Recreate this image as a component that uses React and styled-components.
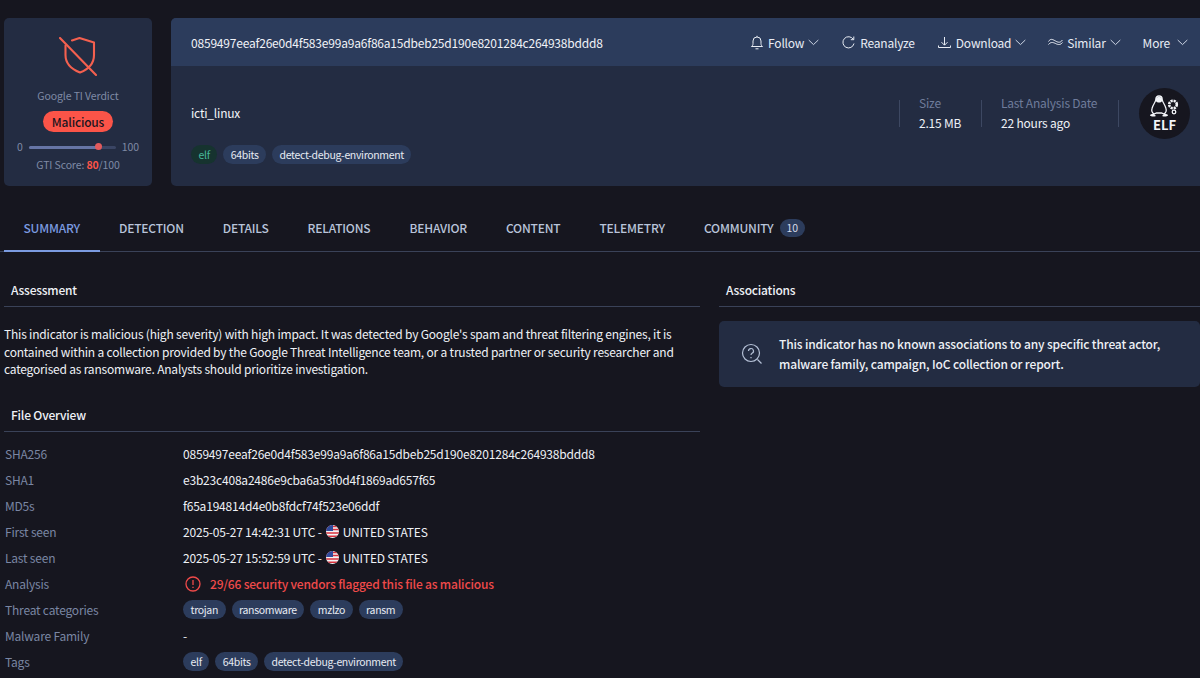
import React from "react";
import styled, { createGlobalStyle } from "styled-components";

const Global = createGlobalStyle`
  html, body { margin: 0; padding: 0; background: #16161f; }
  body { font-family: "Noto Sans CJK JP", "Noto Sans", sans-serif; color: #f2f4f8; letter-spacing: -0.2px; }
  * { box-sizing: border-box; }
`;

const Page = styled.div`
  width: 1200px;
  height: 678px;
  overflow: hidden;
  background: #16161f;
  padding-top: 18px;
`;
const Top = styled.div`
  display: flex;
  gap: 19px;
  padding-left: 4px;
  height: 168px;
`;
const Verdict = styled.div`
  width: 148px;
  background: #232c42;
  border-radius: 5px;
  display: flex;
  flex-direction: column;
  align-items: center;
  padding-top: 19px;
`;
const VerdictLabel = styled.div`
  font-size: 10.5px;
  letter-spacing: -0.1px;
  line-height: 14px;
  color: #7f8aa5;
  margin-top: 12px;
`;
const MalBadge = styled.div`
  margin-top: 8px;
  background: #fb5448;
  color: #1b1620;
  font-size: 12px;
  font-weight: 500;
  line-height: 21px;
  height: 21px;
  padding: 0 9px;
  border-radius: 11px;
`;
const ScoreRow = styled.div`
  display: flex;
  align-items: center;
  width: 122px;
  justify-content: space-between;
  font-size: 10.5px;
  letter-spacing: -0.1px;
  line-height: 14px;
  color: #7f8aa5;
  margin-top: 8px;
`;
const Track = styled.div`
  position: relative;
  width: 87px;
  height: 3px;
  border-radius: 2px;
  background: #3a4564;
`;
const Fill = styled.div`
  height: 3px;
  border-radius: 2px;
  background: #6675a6;
`;
const Knob = styled.span`
  position: absolute;
  top: -2.5px;
  width: 7px;
  height: 7px;
  margin-left: -3px;
  border-radius: 50%;
  background: #e35a5c;
`;
const ScoreText = styled.div`
  font-size: 10.5px;
  letter-spacing: -0.12px;
  line-height: 14px;
  color: #7f8aa5;
  margin-top: 4px;
  b { color: #fb5448; font-weight: 700; }
`;
const Main = styled.div`
  flex: 1;
  background: #232c42;
  border-radius: 5px 0 0 5px;
  display: flex;
  flex-direction: column;
  overflow: hidden;
`;
const MainHead = styled.div`
  height: 48px;
  flex: none;
  background: #2c3c5c;
  display: flex;
  align-items: center;
  justify-content: space-between;
  padding: 0 12px 0 20px;
`;
const Hash = styled.div`
  font-size: 12px;
  color: #f0f2f7;
`;
const Actions = styled.div`
  display: flex;
  align-items: center;
  gap: 22px;
`;
const Action = styled.div`
  display: flex;
  align-items: center;
  gap: 4px;
  font-size: 12px;
  color: #e8ecf4;
  svg { flex: none; }
`;
const MoreAction = styled(Action)`
  gap: 7px;
`;
const MainBody = styled.div`
  flex: 1;
  display: flex;
  justify-content: space-between;
  padding: 0 10px 0 20px;
`;
const FileInfo = styled.div`
  display: flex;
  flex-direction: column;
`;
const FileName = styled.div`
  font-size: 12px;
  line-height: 18px;
  margin-top: 38px;
`;
const Tags = styled.div`
  display: flex;
  gap: 6px;
  margin-top: ${p => p.$mt || 0}px;
`;
const Tag = styled.span`
  height: 19px;
  line-height: 19px;
  padding: 0 7.5px;
  font-size: 10.5px;
  letter-spacing: -0.33px;
  border-radius: 10px;
  background: ${p => p.$green ? "#16332f" : "#2c3c5c"};
  color: ${p => p.$green ? "#47b79a" : "#e6eaf2"};
`;
const Stats = styled.div`
  display: flex;
  align-items: center;
  height: 94px;
`;
const Stat = styled.div`
  border-left: 1px solid #3d4862;
  height: 27px;
  padding-left: 19px;
  width: ${p => p.$w}px;
  display: flex;
  flex-direction: column;
  justify-content: center;
`;
const StatLabel = styled.div`
  font-size: 12px;
  line-height: 20px;
  color: #6f7c9b;
  white-space: nowrap;
`;
const StatValue = styled.div`
  font-size: 12px;
  line-height: 20px;
  color: #eef1f6;
  white-space: nowrap;
`;
const Divider = styled.div`
  width: 1px;
  height: 27px;
  background: #3d4862;
  margin-right: 20px;
`;
const ElfBadge = styled.div`
  width: 51px;
  height: 51px;
  border-radius: 50%;
  background: #16161f;
  display: flex;
  flex-direction: column;
  align-items: center;
  justify-content: center;
  font-size: 13px;
  letter-spacing: 0;
  font-weight: 700;
  line-height: 12px;
  color: #f2f4f8;
`;
const TabBar = styled.div`
  display: flex;
  height: 47px;
  margin-top: 19px;
  padding-left: 4px;
  border-bottom: 1px solid #3a4258;
  align-items: flex-end;
`;
const TabItem = styled.div`
  display: flex;
  align-items: center;
  gap: 6px;
  height: 47px;
  margin-bottom: -1px;
  padding: 0 19.5px;
  font-size: 12px;
  font-weight: 500;
  color: ${p => p.$active ? "#7b9be0" : "#b9c4da"};
  border-bottom: 2px solid ${p => p.$active ? "#7b9be0" : "transparent"};
`;
const Count = styled.span`
  background: #2c3c5c;
  border-radius: 9px;
  height: 18px;
  line-height: 18px;
  padding: 0 7px;
  font-size: 10.5px;
  font-weight: 400;
  color: #d5dbe8;
`;
const Columns = styled.div`
  display: grid;
  grid-template-columns: 696px 481px;
  gap: 19px;
  padding-left: 4px;
  margin-top: 26px;
`;
const SectionHead = styled.div`
  font-size: 12px;
  font-weight: 500;
  line-height: 24px;
  height: 29px;
  padding-left: 7px;
  color: #eef1f6;
  border-bottom: 1px solid #3a4258;
  margin-top: ${p => p.$mt || 0}px;
`;
const Para = styled.p`
  margin: 18px 0 0;
  font-size: 12px;
  line-height: 17.5px;
  color: #eef1f6;
`;
const Rows = styled.div`
  margin-top: 9px;
`;
const Row = styled.div`
  display: flex;
  align-items: center;
  height: 26px;
  padding-left: 1px;
  font-size: 12px;
`;
const RowLabel = styled.div`
  width: 178px;
  flex: none;
  color: #7a86a3;
`;
const RowValue = styled.div`
  color: #eef1f6;
  display: flex;
  align-items: center;
  gap: 4px;
`;
const Alert = styled.div`
  display: flex;
  align-items: center;
  gap: 9px;
  padding-left: 2px;
  color: #f04a4a;
  font-weight: 500;
  font-size: 12px;
  letter-spacing: -0.18px;
`;
const Notice = styled.div`
  margin-top: 14px;
  height: 66px;
  background: #232c42;
  border-radius: 5px;
  display: flex;
  align-items: center;
  gap: 16px;
  padding-left: 22px;
  font-size: 12px;
  letter-spacing: -0.15px;
  font-weight: 500;
  line-height: 20px;
  color: #eef1f6;
`;

const Chevron = () => (
  <svg width="11" height="7" viewBox="0 0 11 7" fill="none" stroke="#cdd5e4" strokeWidth="1">
    <path d="M.7 1l4.8 4.6L10.3 1" />
  </svg>
);
const Flag = () => (
  <svg width="13" height="13" viewBox="0 0 13 13">
    <defs><clipPath id="fc"><circle cx="6.5" cy="6.5" r="6.5" /></clipPath></defs>
    <g clipPath="url(#fc)">
      <rect width="13" height="13" fill="#f4f4f6" />
      <path d="M0 1.5h13M0 4.5h13M0 8h13M0 11.2h13" stroke="#d8303c" strokeWidth="1.6" />
      <rect width="7" height="6" fill="#2f4a9c" />
    </g>
  </svg>
);

const tabs = ["SUMMARY", "DETECTION", "DETAILS", "RELATIONS", "BEHAVIOR", "CONTENT", "TELEMETRY"];

export default function App() {
  return (
    <Page>
      <Global />
      <Top>
        <Verdict>
          <svg width="38" height="40" viewBox="0 0 38 40" fill="none" stroke="#f4604f" strokeWidth="2.1" strokeLinecap="round" strokeLinejoin="round">
            <path d="M13 3.500 20.500 1 35 5.500V18c0 8-5 14-14 17.500C12 32 6.500 26 6.500 18V8.500" />
            <path d="M1 1 37 38" />
          </svg>
          <VerdictLabel>Google TI Verdict</VerdictLabel>
          <MalBadge>Malicious</MalBadge>
          <ScoreRow>
            <span>0</span>
            <Track>
              <Fill style={{ width: "80%" }} />
              <Knob style={{ left: "80%" }} />
            </Track>
            <span>100</span>
          </ScoreRow>
          <ScoreText>GTI Score: <b>80</b>/100</ScoreText>
        </Verdict>
        <Main>
          <MainHead>
            <Hash>0859497eeaf26e0d4f583e99a9a6f86a15dbeb25d190e8201284c264938bddd8</Hash>
            <Actions>
              <Action>
                <svg width="14" height="15" viewBox="0 0 14 15" fill="none" stroke="#e8ecf4" strokeWidth="1"><path d="M1.500 11.500c1-.8 1.500-1.500 1.500-3V6a4 4 0 0 1 8 0v2.500c0 1.500.5 2.200 1.500 3zM5.500 13.800h3M7 .8v1.200" /></svg>
                Follow <Chevron />
              </Action>
              <Action>
                <svg width="15" height="15" viewBox="0 0 15 15" fill="none" stroke="#e8ecf4" strokeWidth="1"><path d="M12.300 4.400A5.600 5.600 0 1 0 13 8.500M12.800 1.500v3.200H9.800" /></svg>
                Reanalyze
              </Action>
              <Action>
                <svg width="15" height="15" viewBox="0 0 15 15" fill="none" stroke="#e8ecf4" strokeWidth="1"><path d="M7.500 2v8M4.500 7.200l3 3 3-3M1.500 10.500v2h12v-2" /></svg>
                Download <Chevron />
              </Action>
              <Action>
                <svg width="15" height="15" viewBox="0 0 15 15" fill="none" stroke="#e8ecf4" strokeWidth="1"><path d="M.5 6.500C2.500 3.500 4 4 7.500 6s5 1.500 7-1M.5 9.500C2.500 7 4.500 7 7.500 8.500s5 1.500 7-1" /></svg>
                Similar <Chevron />
              </Action>
              <MoreAction>
                More <Chevron />
              </MoreAction>
            </Actions>
          </MainHead>
          <MainBody>
            <FileInfo>
              <FileName>icti_linux</FileName>
              <Tags $mt={23}>
                <Tag $green>elf</Tag>
                <Tag>64bits</Tag>
                <Tag>detect-debug-environment</Tag>
              </Tags>
            </FileInfo>
            <Stats>
              <Stat $w={82}>
                <StatLabel>Size</StatLabel>
                <StatValue>2.15 MB</StatValue>
              </Stat>
              <Stat $w={137}>
                <StatLabel>Last Analysis Date</StatLabel>
                <StatValue>22 hours ago</StatValue>
              </Stat>
              <Divider />
              <ElfBadge>
                <svg width="31" height="24" viewBox="0 0 31 24" fill="none" stroke="#f2f4f8" strokeWidth="1.300">
                  <path d="M10 1c2.200 0 3.200 1.500 3.200 3.500 0 2.500 2.800 5 3.800 9 .7 2.500-.5 4.500-2 5.500l-2.500-1H7.500L5 19c-1.500-1-2.700-3-2-5.500 1-4 3.800-6.500 3.800-9C6.800 2.500 7.800 1 10 1z" />
                  <path d="M7 3.200c1-1.500 5-1.500 6 0v3c-1 1.800-5 1.800-6 0z" fill="#f2f4f8" stroke="none" />
                  <path d="M4.500 18.500c-2 .5-3.500 1-3.500 2 1 1 3.500 1.500 6 .5zM15.500 18.500c2 .5 3.500 1 3.500 2-1 1-3.500 1.500-6 .5z" fill="#f2f4f8" stroke="none" />
                  <circle cx="24" cy="9.500" r="3.800" strokeWidth="2.600" strokeDasharray="2.200 .8" />
                  <circle cx="25" cy="17" r="1.800" strokeWidth="1.300" />
                </svg>
                ELF
              </ElfBadge>
            </Stats>
          </MainBody>
        </Main>
      </Top>
      <TabBar>
        {tabs.map((t, i) => <TabItem key={t} $active={i === 0}>{t}</TabItem>)}
        <TabItem>COMMUNITY <Count>10</Count></TabItem>
      </TabBar>
      <Columns>
        <div>
          <SectionHead>Assessment</SectionHead>
          <Para>
            This indicator is malicious (high severity) with high impact. It was detected by Google's spam and threat filtering engines, it is contained within a collection provided by the Google Threat Intelligence team, or a trusted partner or security researcher and categorised as ransomware. Analysts should prioritize investigation.
          </Para>
          <SectionHead $mt={25}>File Overview</SectionHead>
          <Rows>
            <Row><RowLabel>SHA256</RowLabel><RowValue>0859497eeaf26e0d4f583e99a9a6f86a15dbeb25d190e8201284c264938bddd8</RowValue></Row>
            <Row><RowLabel>SHA1</RowLabel><RowValue>e3b23c408a2486e9cba6a53f0d4f1869ad657f65</RowValue></Row>
            <Row><RowLabel>MD5s</RowLabel><RowValue>f65a194814d4e0b8fdcf74f523e06ddf</RowValue></Row>
            <Row><RowLabel>First seen</RowLabel><RowValue>2025-05-27 14:42:31 UTC - <Flag /> UNITED STATES</RowValue></Row>
            <Row><RowLabel>Last seen</RowLabel><RowValue>2025-05-27 15:52:59 UTC - <Flag /> UNITED STATES</RowValue></Row>
            <Row>
              <RowLabel>Analysis</RowLabel>
              <Alert>
                <svg width="16" height="16" viewBox="0 0 16 16" fill="none" stroke="#f04a4a" strokeWidth="1.300"><circle cx="8" cy="8" r="7" /><path d="M8 4v5M8 10.800v1.200" /></svg>
                29/66 security vendors flagged this file as malicious
              </Alert>
            </Row>
            <Row>
              <RowLabel>Threat categories</RowLabel>
              <Tags>
                <Tag>trojan</Tag><Tag>ransomware</Tag><Tag>mzlzo</Tag><Tag>ransm</Tag>
              </Tags>
            </Row>
            <Row><RowLabel>Malware Family</RowLabel><RowValue>-</RowValue></Row>
            <Row>
              <RowLabel>Tags</RowLabel>
              <Tags>
                <Tag>elf</Tag><Tag>64bits</Tag><Tag>detect-debug-environment</Tag>
              </Tags>
            </Row>
          </Rows>
        </div>
        <div>
          <SectionHead>Associations</SectionHead>
          <Notice>
            <svg width="22" height="22" viewBox="0 0 22 22" fill="none" stroke="#b4c0d6" strokeWidth="1.200">
              <circle cx="10" cy="10" r="8.500" />
              <path d="M16.500 16.500 20.500 20.500M7.500 8a2.500 2.500 0 1 1 3.500 2.300c-.7.4-1 .8-1 1.700M10 14v1.200" />
            </svg>
            <div>This indicator has no known associations to any specific threat actor,<br />malware family, campaign, IoC collection or report.</div>
          </Notice>
        </div>
      </Columns>
    </Page>
  );
}
